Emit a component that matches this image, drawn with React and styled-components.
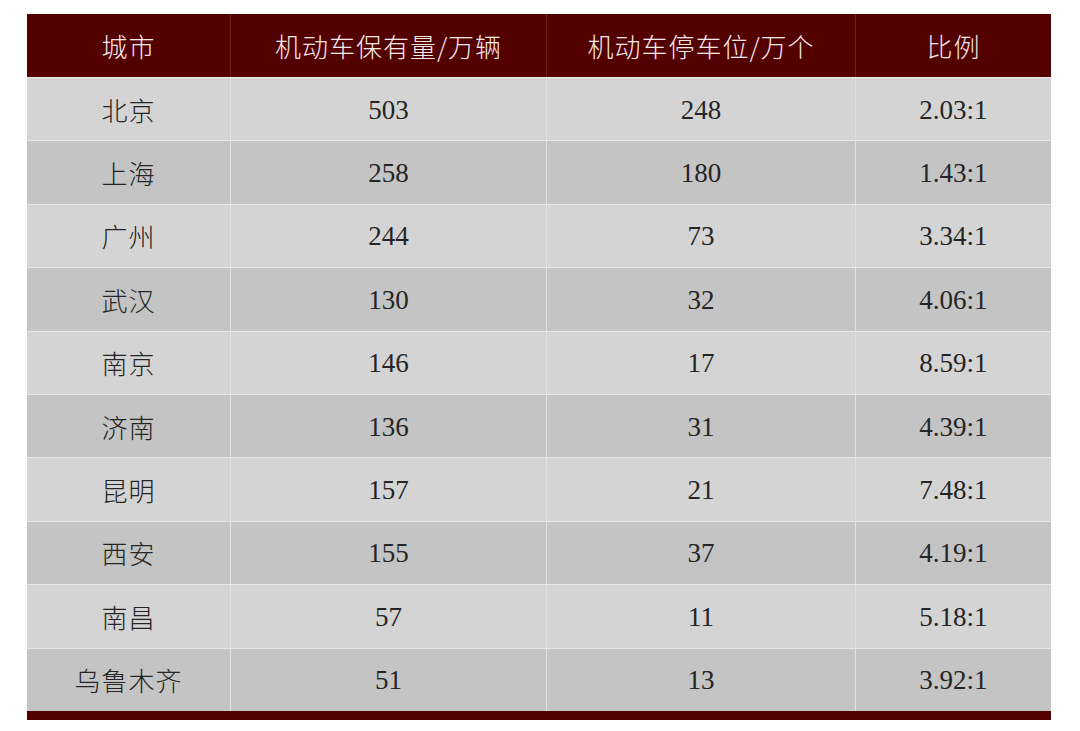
import React from "react";
import styled, { createGlobalStyle } from "styled-components";

const darkRed = "#520000";

const GlobalStyle = createGlobalStyle`
  html, body {
    margin: 0;
    padding: 0;
    background: #ffffff;
  }
`;

const Page = styled.div`
  width: 1080px;
  height: 731px;
  padding: 14px 0 0 27px;
  box-sizing: border-box;
`;

const Table = styled.div`
  width: 1024px;
  display: flex;
  flex-direction: column;
`;

const Row = styled.div`
  display: grid;
  grid-template-columns: 203px 316px 309px 196px;
  height: ${p => (p.$header ? "63px" : "63.4px")};
  box-sizing: border-box;
  background-color: ${p =>
    p.$header ? darkRed : p.$alt ? "#c4c4c4" : "#d4d4d4"};
  border-top: ${p => (p.$header ? "none" : "1px solid #e8e8e8")};
`;

const Cell = styled.div`
  display: flex;
  align-items: center;
  justify-content: center;
  box-sizing: border-box;
  padding-top: ${p => (p.$num ? "2px" : "0")};
  border-left: ${p =>
    p.$first ? "none" : p.$header ? "1px solid #6b1e1e" : "1px solid #e2e2e2"};
  color: ${p => (p.$header ? "#f5e8e8" : "#252525")};
  font-family: ${p =>
    p.$num
      ? `"Liberation Serif", "Noto Sans CJK SC", serif`
      : `"Noto Sans CJK SC", "Noto Sans", sans-serif`};
  font-weight: ${p => (p.$num ? 400 : 300)};
  font-size: ${p => (p.$num ? "27px" : "26px")};
  letter-spacing: ${p => (p.$num ? "0" : "1px")};
  white-space: nowrap;
`;

const BottomBar = styled.div`
  height: 9px;
  background-color: ${darkRed};
`;

const headers = ["城市", "机动车保有量/万辆", "机动车停车位/万个", "比例"];

const rows = [
  ["北京", "503", "248", "2.03:1"],
  ["上海", "258", "180", "1.43:1"],
  ["广州", "244", "73", "3.34:1"],
  ["武汉", "130", "32", "4.06:1"],
  ["南京", "146", "17", "8.59:1"],
  ["济南", "136", "31", "4.39:1"],
  ["昆明", "157", "21", "7.48:1"],
  ["西安", "155", "37", "4.19:1"],
  ["南昌", "57", "11", "5.18:1"],
  ["乌鲁木齐", "51", "13", "3.92:1"],
];

const App = () => (
  <Page>
    <GlobalStyle />
    <Table>
      <Row $header>
        {headers.map((h, i) => (
          <Cell key={h} $header $first={i === 0}>
            {h}
          </Cell>
        ))}
      </Row>
      {rows.map((r, ri) => (
        <Row key={r[0]} $alt={ri % 2 === 1}>
          {r.map((v, i) => (
            <Cell key={i} $first={i === 0} $num={i > 0}>
              {v}
            </Cell>
          ))}
        </Row>
      ))}
      <BottomBar />
    </Table>
  </Page>
);

export default App;
